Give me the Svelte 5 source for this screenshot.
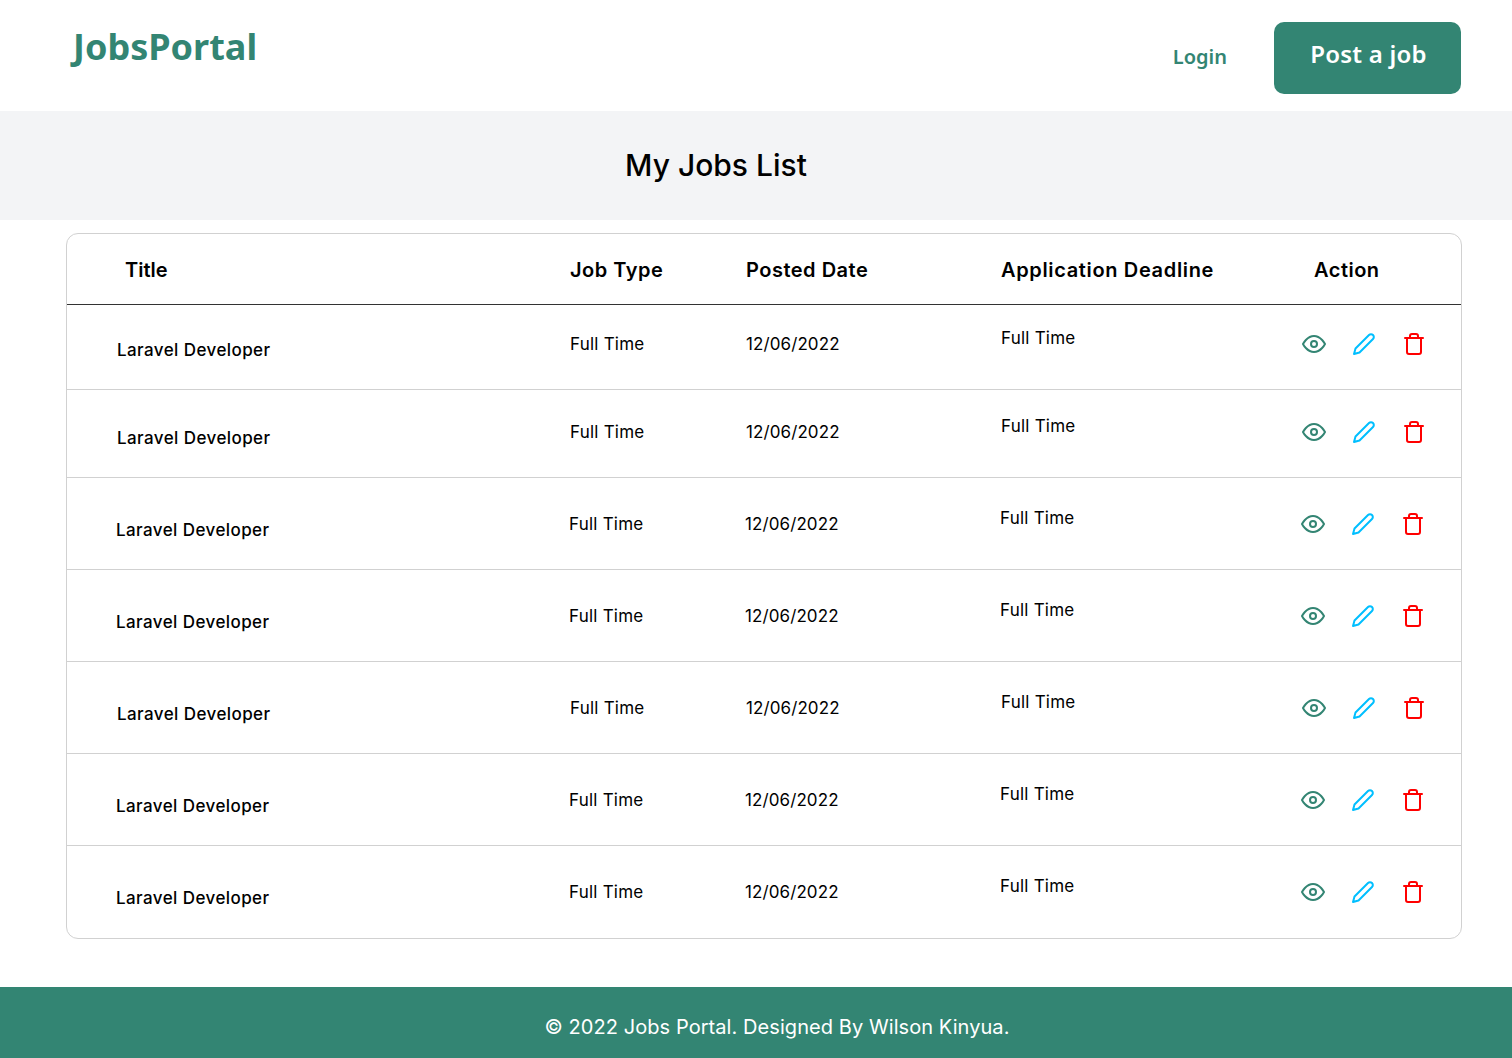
<script>
  const rows = [
    { pad: 33, shift: false, h: 84 },
    { pad: 36, shift: false, h: 87 },
    { pad: 40, shift: true, h: 91 },
    { pad: 40, shift: true, h: 91 },
    { pad: 40, shift: false, h: 91 },
    { pad: 40, shift: true, h: 91 },
    { pad: 40, shift: true, h: 92 }
  ];
</script>

<header class="top">
  <a class="logo" href="#home">JobsPortal</a>
  <nav class="nav">
    <a class="login" href="#login">Login</a>
    <a class="post" href="#post">Post a job</a>
  </nav>
</header>

<section class="band"><h1>My Jobs List</h1></section>

<main class="wrap">
  <div class="card">
    <div class="head grid">
      <div class="h-title">Title</div>
      <div>Job Type</div>
      <div>Posted Date</div>
      <div class="h-dead">Application Deadline</div>
      <div class="h-action">Action</div>
    </div>
    {#each rows as r, i}
      <div class="row grid" class:shift={r.shift} class:last={i === rows.length - 1} style="height:{r.h}px;--pad:{r.pad}px">
        <div class="c-title">Laravel Developer</div>
        <div class="c-type">Full Time</div>
        <div class="c-type c-date">12/06/2022</div>
        <div class="c-dead">Full Time</div>
        <div class="actions">
          <svg class="ic eye" viewBox="0 0 24 24"><path d="M1 12s4-8 11-8 11 8 11 8-4 8-11 8-11-8-11-8z" /><circle cx="12" cy="12" r="3" /></svg>
          <svg class="ic pen" viewBox="0 0 24 24"><path d="M17 3a2.828 2.828 0 1 1 4 4L7.5 20.5 2 22l1.5-5.5L17 3z" /></svg>
          <svg class="ic bin" viewBox="0 0 24 24"><path d="M3 6h18" /><path d="M19 6v14a2 2 0 0 1-2 2H7a2 2 0 0 1-2-2V6m3 0V4a2 2 0 0 1 2-2h4a2 2 0 0 1 2 2v2" /></svg>
        </div>
      </div>
    {/each}
  </div>
</main>

<footer class="foot">© 2022 Jobs Portal. Designed By Wilson Kinyua.</footer>

<style>
  :global(body) {
    margin: 0;
    background: #fff;
    font-family: Inter, "Liberation Sans", sans-serif;
    color: #000;
  }
  a { text-decoration: none; }
  .top {
    height: 111px;
    box-sizing: border-box;
    padding: 22px 51px 0 73px;
    display: flex;
    justify-content: space-between;
    align-items: flex-start;
    font-family: "Noto Sans", sans-serif;
    color: #338573;
  }
  .logo {
    color: #338573;
    font-size: 36px;
    font-weight: 700;
    line-height: 50px;
  }
  .nav { display: flex; align-items: center; gap: 47px; }
  .login { color: #338573; font-size: 20px; font-weight: 600; padding-bottom: 4px; }
  .post {
    width: 187px;
    height: 72px;
    display: flex;
    align-items: center;
    justify-content: center;
    box-sizing: border-box;
    padding: 0 0 10px 2px;
    background: #338573;
    color: #fff;
    border-radius: 10px;
    font-size: 24px;
    font-weight: 600;
    letter-spacing: 0.2px;
  }
  .band {
    height: 109px;
    background: #f3f4f6;
    display: flex;
    align-items: center;
    justify-content: center;
    padding-right: 80px;
  }
  h1 { margin: 0; font-size: 30px; font-weight: 500; line-height: 109px; }
  .wrap { padding: 13px 50px 48px 66px; }
  .card {
    border: 1px solid #d1d1d1;
    border-radius: 12px;
    overflow: hidden;
    background: #fff;
  }
  .grid {
    display: grid;
    grid-template-columns: 503px 176px 255px 255px 1fr;
  }
  .head {
    height: 71px;
    box-sizing: border-box;
    padding-top: 1px;
    align-items: center;
    border-bottom: 1px solid #333;
    font-size: 20px;
    font-weight: 600;
    letter-spacing: 0.5px;
  }
  .h-title { padding-left: 58px; letter-spacing: 0; }
  .h-dead { letter-spacing: 0.65px; }
  .h-action { padding-left: 58px; }
  .row {
    box-sizing: content-box;
    border-bottom: 1px solid #d1d1d1;
    font-size: 17px;
    align-items: start;
    letter-spacing: 0.22px;
  }
  .row.last { border-bottom: 0; }
  .row.shift { margin-left: -1px; }
  .row > div { line-height: 20px; }
  .c-title { padding: calc(var(--pad) + 2px) 0 0 50px; font-weight: 500; letter-spacing: 0.42px; }
  .c-type { padding-top: calc(var(--pad) - 4px); }
  .c-date { letter-spacing: 0.1px; }
  .c-dead { padding-top: calc(var(--pad) - 10px); }
  .actions {
    padding: calc(var(--pad) - 6px) 0 0 46px;
    display: flex;
    gap: 26px;
  }
  .ic {
    width: 24px;
    height: 24px;
    display: block;
    flex: none;
    fill: none;
    stroke-width: 2;
    stroke-linecap: round;
    stroke-linejoin: round;
  }
  .eye { stroke: #338573; }
  .pen { stroke: #00bfff; }
  .bin { stroke: #ff0000; }
  .foot {
    height: 71px;
    box-sizing: border-box;
    background: #338573;
    color: #fff;
    display: flex;
    align-items: center;
    justify-content: center;
    padding: 8px 0 0 42px;
    font-size: 20px;
    letter-spacing: 0.07px;
  }
</style>
